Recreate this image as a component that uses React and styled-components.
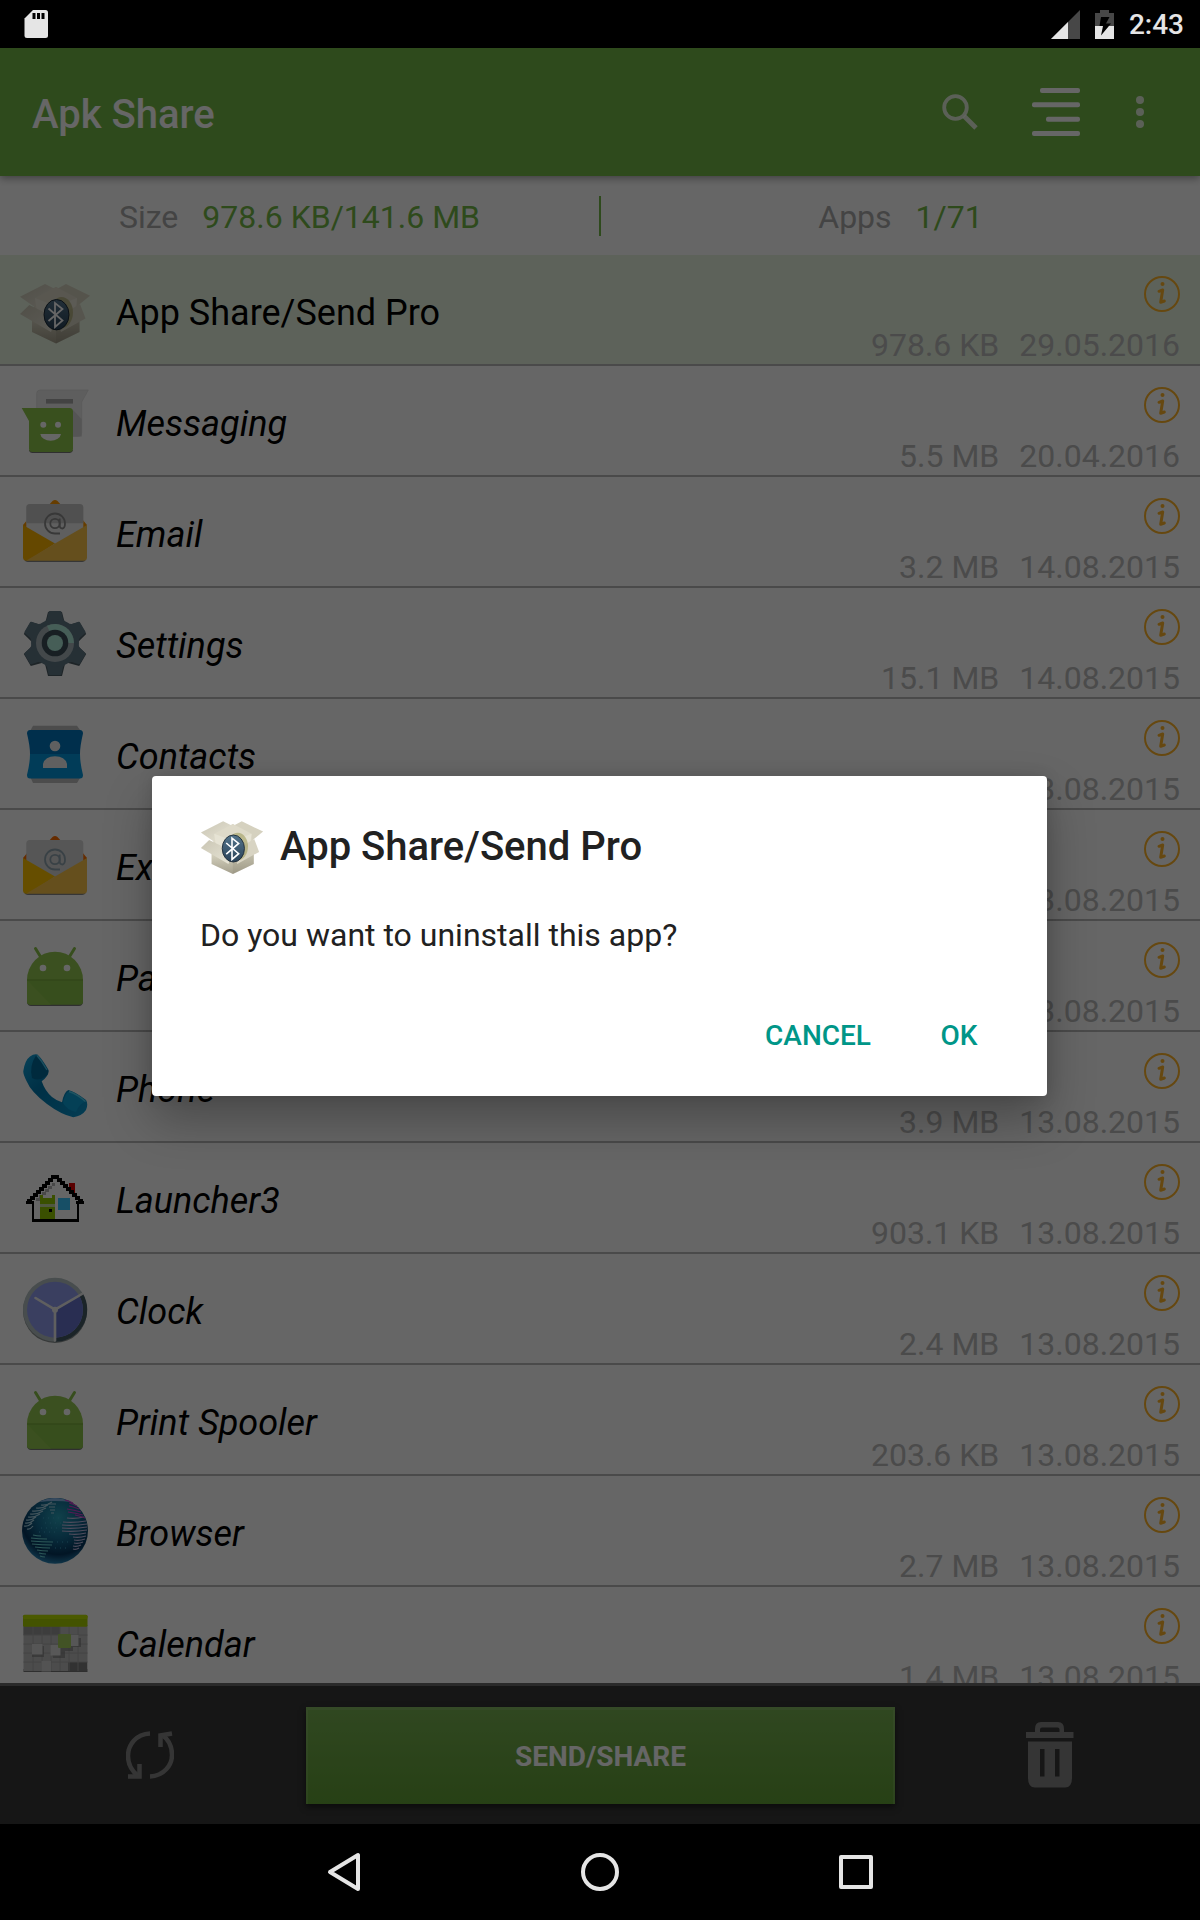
import React, { useId } from 'react'
import styled, { createGlobalStyle } from 'styled-components'

const GlobalStyle = createGlobalStyle`
    * {
        box-sizing: border-box;
    }

    body {
        margin: 0;
        background: #000;
        font-family: Roboto, 'Noto Sans', sans-serif;
    }

    button {
        border: 0;
        padding: 0;
        background: none;
        font-family: inherit;
        cursor: pointer;
    }

    svg {
        display: block;
        flex: none;
    }
`

const green = '#73b946'
const grey = '#aaa'

const Device = styled.div`
    display: flex;
    flex-direction: column;
    height: 100vh;
`

const StatusBar = styled.div`
    display: flex;
    align-items: center;
    height: 48px;
    padding: 0 16px 0 24px;
    color: #e5e5e5;
`

const StatusRight = styled.div`
    display: flex;
    align-items: center;
    gap: 15px;
    margin-left: auto;
`

const Time = styled.span`
    padding-top: 2px;
    font-size: 28px;
    font-weight: 500;
    line-height: 32px;
`

const Screen = styled.div`
    position: relative;
    flex: 1;
    min-height: 0;
    display: flex;
    flex-direction: column;
    background: #fff;
`

const Header = styled.header`
    position: relative;
    display: flex;
    align-items: center;
    height: 128px;
    padding: 0 24px 0 32px;
    background: ${green};
    color: #fff;
    box-shadow: 0 2px 8px rgba(0, 0, 0, 0.4);

    h1 {
        margin: 0 auto 0 0;
        padding-top: 5px;
        font-size: 40px;
        font-weight: 500;
        line-height: 48px;
    }
`

const HeaderButton = styled.button`
    display: flex;
    justify-content: center;
    width: ${props => props.$width}px;
    color: ${props => props.$faded ? 'rgba(255, 255, 255, 0.8)' : '#fff'};
`

const Summary = styled.div`
    display: flex;
    align-items: center;
    height: 79px;
`

const SummaryCell = styled.div`
    flex: 1;
    display: flex;
    justify-content: center;
    gap: 24px;
    height: 40px;
    color: ${grey};
    font-size: 32px;
    line-height: 42px;

    & + & {
        border-left: 2px solid ${green};
    }

    strong {
        font-weight: 400;
        color: ${green};
    }
`

const AppList = styled.ul`
    flex: 1;
    min-height: 0;
    margin: 0;
    padding: 0;
    overflow: hidden;
    list-style: none;
`

const Row = styled.li`
    display: flex;
    justify-content: space-between;
    height: 111px;
    border-bottom: 2px solid #b9b9b9;
    background: ${props => props.$selected ? '#e8f5e1' : '#fff'};
`

const RowMain = styled.div`
    display: flex;
    align-items: center;
    gap: 25px;
    padding: 7px 0 0 19px;
`

const RowName = styled.span`
    font-size: 36px;
    line-height: 42px;
    font-style: ${props => props.$system ? 'italic' : 'normal'};
`

const RowSide = styled.div`
    display: flex;
    flex-direction: column;
    align-items: flex-end;
    justify-content: space-between;
    padding: 21px 20px 0 0;
`

const InfoButton = styled.button`
    color: #ffb429;
`

const Meta = styled.div`
    display: flex;
    gap: 20px;
    color: #bbb;
    font-size: 32px;
    line-height: 38px;
`

const Footer = styled.footer`
    display: flex;
    align-items: center;
    height: 141px;
    border-top: 3px solid #6a6a6a;
    background: #373737;
`

const FooterButton = styled.button`
    display: flex;
    justify-content: center;
    width: 25%;
    color: #848484;
`

const SendButton = styled.button`
    flex: 1;
    height: 97px;
    margin: 0 5px 0 6px;
    border: solid rgba(255, 255, 255, 0.1);
    border-width: 3px 2px 0;
    background: linear-gradient(#78b252, #62a136) border-box;
    box-shadow: 0 3px 6px rgba(0, 0, 0, 0.5);
    color: #fff;
    font-size: 28px;
    font-weight: 700;
`

const Scrim = styled.div`
    position: absolute;
    inset: 0;
    display: flex;
    align-items: center;
    padding: 0 153px 0 152px;
    background: rgba(0, 0, 0, 0.6);
`

const Dialog = styled.section`
    flex: 1;
    padding: 39px 40px 25px 48px;
    border-radius: 4px;
    background: #fff;
    box-shadow: 0 24px 48px rgba(0, 0, 0, 0.28), 0 0 16px rgba(0, 0, 0, 0.12);
    color: #212121;

    p {
        margin: 36px 0 0;
        font-size: 32px;
        line-height: 40px;
    }
`

const DialogTitle = styled.div`
    display: flex;
    align-items: center;
    gap: 16px;

    h2 {
        margin: 0;
        font-size: 40px;
        font-weight: 500;
        line-height: 48px;
    }
`

const DialogActions = styled.div`
    display: flex;
    justify-content: flex-end;
    gap: 24px;
    margin-top: 44px;
`

const DialogButton = styled.button`
    min-width: ${props => props.$width}px;
    height: 72px;
    color: #009688;
    font-size: 28px;
    font-weight: 500;
`

const NavBar = styled.nav`
    display: flex;
    align-items: center;
    justify-content: center;
    height: 96px;
`

const NavButton = styled.button`
    display: flex;
    justify-content: center;
    width: 256px;
    color: #e5e5e5;
`

const Svg = ({ size = 72, children, ...rest }) => (
    <svg width={size} height={size} viewBox="0 0 72 72" aria-hidden="true" {...rest}>{children}</svg>
)

const BoxIcon = ({ size }) => {
    const id = useId()
    return (
        <Svg size={size}>
            <defs>
                <linearGradient id={id + 'side'} x1="0" y1="0" x2="0" y2="1">
                    <stop offset="0" stopColor="#d9d5c2" />
                    <stop offset="1" stopColor="#a39e8c" />
                </linearGradient>
                <linearGradient id={id + 'flap'} x1="0" y1="0" x2="1" y2="1">
                    <stop offset="0" stopColor="#c9c5b3" />
                    <stop offset="1" stopColor="#e9e6d8" />
                </linearGradient>
                <linearGradient id={id + 'disc'} x1="0" y1="0" x2="0" y2="1">
                    <stop offset="0" stopColor="#54758c" />
                    <stop offset="1" stopColor="#2a4258" />
                </linearGradient>
            </defs>
            <path d="M13 42 37 52 60.500 42V55L37 66.500 13 55Z" fill={`url(#${id}side)`} />
            <path d="M37 50V66.500L60.500 55V42Z" fill="#8d8875" opacity="0.25" />
            <path d="M15 24 37 10 59 24V42L37 52 15 42Z" fill="#d6d2c0" />
            <path d="M1 19.700 26 7 38 13 17 31Z" fill={`url(#${id}flap)`} />
            <path d="M71 18.700 47 7 36 13 57 30Z" fill="#d5d1bf" />
            <path d="M16 21 37 10 58 21V31L37 27 16 31Z" fill="#dedac9" />
            <path d="M16 21 37 29 58 21 56 36 37 45 18 36Z" fill="#e6e3d4" />
            <path d="M10.300 28 37 41 32 55 1 37Z" fill={`url(#${id}flap)`} />
            <path d="M61 27 37 41 42 55 66.500 41.500Z" fill="#d8d4c3" />
            <ellipse cx="42.500" cy="35.500" rx="11.500" ry="15.500" fill="#a9a66f" opacity="0.7" />
            <ellipse cx="37.500" cy="37.700" rx="12.500" ry="15.200" fill={`url(#${id}disc)`} stroke="#1c2a36" />
            <path d="M29.500 31.500 43.500 43.500 36 50V26L43.500 32 29.500 44" fill="none" stroke="#fff" strokeWidth="1.800" />
        </Svg>
    )
}

const MessagingIcon = () => (
    <Svg>
        <path d="M21 2H69.300L62.700 14V45a3.500 3.500 0 0 1-3.500 3.500H21.200a3.500 3.500 0 0 1-3.500-3.500V5.500A3.500 3.500 0 0 1 21 2Z" fill="#ececec" stroke="#ddd" strokeWidth="0.700" />
        <path d="M54 22 62.700 31V48.500H54Z" fill="#d5d5d5" />
        <rect x="27" y="11" width="27" height="4.600" fill="#a8a8a8" />
        <path d="M10 62a3.500 3.500 0 0 0 3.500 3H51a3.500 3.500 0 0 0 3-3Z" fill="#777" />
        <path d="M2.700 20H50.500A3.500 3.500 0 0 1 54 23.500V60.500A3.500 3.500 0 0 1 50.500 64H13.500A3.500 3.500 0 0 1 10 60.500V33Z" fill="#8fc74b" />
        <circle cx="24.300" cy="36.700" r="3" fill="#fff" />
        <circle cx="39" cy="36.700" r="3" fill="#fff" />
        <path d="M21.300 46H42a10.400 7.500 0 0 1-20.700 0Z" fill="#fff" />
    </Svg>
)

const MailIcon = ({ top, tip, left, paper, shade, ink }) => (
    <Svg>
        <path d={`M29 ${top + 2} 33.500 ${top - 3}q2.500-2 5 0L43 ${top + 2}Z`} fill={tip} />
        <path d="M4 26 9 20H63L68 26 60 42H12Z" fill={tip} />
        <path d="M5 60q1 3 4 3H63q3 0 4-3Z" fill="#888" />
        <path d={`M7.300 ${top + 3.500}q0-3.500 3.500-3.500H60.800q3.500 0 3.500 3.500V40L36 56 7.300 40Z`} fill={paper} />
        {shade && <path d={`M7.300 24.300V${top + 3.500}q0-3.500 3.500-3.500H60.800q3.500 0 3.500 3.500V24.300Z`} fill={shade} />}
        <g fill="none" stroke={ink} strokeWidth="1.800" transform={`translate(36 ${top + 19.500})`}>
            <circle r="4.700" />
            <path d="M4.700-5V2.500q.3 2.500 2.700 2.500 2.600-.5 2.600-5A10 10 0 1 0 0 10H5" />
        </g>
        <path d="M4 26 36 44.500 9 61.800H7.500Q4 61.800 4 58.300Z" fill={left} />
        <path d="M68 26V58.300q0 3.500-3.500 3.500H7.500L9 60.500 36 44.500Z" fill="#fcc549" />
    </Svg>
)

const EmailIcon = () => <MailIcon top={5} tip="#ff9800" left="#fdb300" paper="#ededed" shade="#c9c9c9" ink="#8c8c8c" />

const ExchangeIcon = () => <MailIcon top={8} tip="#ff6f00" left="#ffc400" paper="#d6d6d6" ink="#90a4ae" />

const teeth = [0, 60, 120, 180, 240, 300]

const SettingsIcon = () => (
    <Svg>
        <g transform="translate(36 33)">
            <g transform="translate(0 1)" fill="#4a5a62">
                {teeth.map(a => <path key={a} d="M-10-20-7-32H7L10-20Z" transform={`rotate(${a})`} />)}
            </g>
            <g fill="#607885">
                {teeth.map(a => <path key={a} d="M-11-20-8-24-6.500-31q.2-1 1.200-1H5.300q1 0 1.200 1L8-24 11-20Z" transform={`rotate(${a})`} />)}
                <circle r="24" />
            </g>
            <circle r="19" fill="#a9b4ba" />
            <path d="M0 0-8-17.200A19 19 0 0 1 19 0Z" fill="#aeeada" />
            <circle r="13.300" fill="#3c4f58" />
            <circle r="8" fill="#aeeada" />
        </g>
    </Svg>
)

const ContactsIcon = () => (
    <Svg>
        <path d="M14 4.700H58L61 9V57L58 62H14L11.700 57V9Z" fill="#bdbdbd" />
        <path d="M11 9H61q3 0 3 3.500Q61 25 61 33H11Q11 25 8 12.500 8 9 11 9Z" fill="#0277bd" />
        <path d="M11 33H61Q61 42 64 54q0 3.500-3 3.500H11q-3 0-3-3.500Q11 42 11 33Z" fill="#0396db" />
        <circle cx="36" cy="25" r="5.300" fill="#f0f0f0" />
        <path d="M24 47V43Q26 35.300 36 35.300T48 43V47Z" fill="#f0f0f0" />
    </Svg>
)

const AndroidIcon = () => (
    <Svg>
        <path d="M8 59q.5 4 4 4H60q3.500 0 4-4Z" fill="#777" />
        <path d="M16.500 5.500 22 14.500M55.500 5.500 50 14.500" stroke="#8bc34a" strokeWidth="3" strokeLinecap="round" />
        <path d="M8 37A28 28.300 0 0 1 64 37Z" fill="#94c850" />
        <path d="M8 37H64V58.500q0 3.200-3.200 3.200H11.200Q8 61.700 8 58.500Z" fill="#8bc34a" />
        <path d="M8 37 32 61.700H12Q8 61.700 8 58Z" fill="#94c850" />
        <path d="M8 37H64" stroke="#7eb03f" strokeWidth="1.500" />
        <circle cx="24" cy="25" r="3.300" fill="#fff" />
        <circle cx="48" cy="25" r="3.300" fill="#fff" />
    </Svg>
)

const PhoneIcon = () => (
    <Svg>
        <defs>
            <linearGradient id="handset" x1="0" y1="0" x2="1" y2="1">
                <stop offset="0" stopColor="#12a5dc" />
                <stop offset="0.400" stopColor="#0078ad" />
                <stop offset="1" stopColor="#0a98d0" />
            </linearGradient>
        </defs>
        <path d="M4.300 17Q6 6 11 2.500 15-.500 18.500.500 24 6 29.500 16 30.500 21 22.700 27.300 26 37 33 43 38 47 43 48.300 45 38 49.300 36 56 37.500 67 46 69.500 50 67 56 63 62 54.300 63.300 42 60.500 28 50 12 38 7.500 27 4 20 4.300 17Z" fill="url(#handset)" />
        <path d="M17 1.500Q10 12 13 24 20 28 27 22 30 19 29 16 22 5 17 1.500Z" fill="#00699a" />
        <path d="M18 1.500Q23 7 28 16" fill="none" stroke="#46c3ea" strokeWidth="1.500" />
        <path d="M44 49Q46 39 50 37.500 58 40 66.500 47.500 60 50 57 58 48 56 44 49Z" fill="#0aa0d8" />
        <path d="M50 37.500Q58 40 66.500 47.500" fill="none" stroke="#4fd0f2" strokeWidth="1.500" />
    </Svg>
)

const LauncherIcon = () => (
    <Svg shapeRendering="crispEdges">
        <rect x="50" y="18" width="6" height="10" fill="#e00000" />
        <path d="M36 13 60 37V56H13V37Z" fill="#fff" />
        <path d="M33 18h3v3h-3v3h-3v3h-3v3h-3v3h-3v3h-4v-3h3v-3h3v-3h3v-3h3v-3h4Z" fill="#b5b5b5" />
        {[0, 1, 2, 3, 4, 5, 6, 7, 8].map(i => (
            <g key={i}>
                <rect x={32 - i * 3} y={10 + i * 3} width="5" height="4" />
                <rect x={35 + i * 3} y={10 + i * 3} width="5" height="4" />
            </g>
        ))}
        <path d="M7 36h8v3H7ZM57 36h8v3H57Z" />
        <path d="M13 38h2v16h43V38h2v18.500H13Z" />
        <path d="M21 30h3v3h9v-3h3v9H21ZM21 42h15v12H21Z" fill="#92c800" />
        <path d="M21 39h15v3H21Z" fill="#c8dca0" />
        <rect x="30" y="44" width="3" height="3" />
        <rect x="39" y="33" width="12" height="12" fill="#3ac5ff" />
    </Svg>
)

const ClockIcon = () => (
    <Svg>
        <circle cx="36" cy="35" r="32" fill="#8a9090" />
        <circle cx="36" cy="33.700" r="32" fill="#b4c0c2" />
        <path d="M36 33.700 63.700 17.300A32 32 0 0 1 36 65.700Z" fill="#455a64" />
        <circle cx="36" cy="33.700" r="28" fill="#929ef0" />
        <path d="M36 33.700 60 19.500A28 28 0 0 1 36 61.700Z" fill="#6874cc" />
        <path d="M36 33.700 16.500 22M36 33.700 63 18M36 33.700V64.500" stroke="#eee" strokeWidth="2.600" strokeLinecap="round" />
        <circle cx="36" cy="33.700" r="3" fill="#eee" />
    </Svg>
)

// land masses on the globe, one [x1, y, x2] dash per scan line
const westLand = [[22, 7, 33], [17, 10, 29], [13, 13, 27], [11, 16, 24], [9, 19, 21], [7, 22, 17], [6, 25, 15], [5, 28, 13], [8, 31, 14]]
const southLand = [[14, 37, 22], [12, 40, 28], [12, 43, 34], [13, 46, 33], [16, 49, 31], [18, 52, 29], [20, 55, 27], [21, 58, 26]]
const eastLand = [[48, 20, 65], [44, 24, 67], [43, 27, 68], [43, 30, 68], [43, 33, 68], [50, 36, 67], [54, 39, 67], [55, 42, 66], [55, 45, 64], [54, 48, 62], [54, 51, 60]]
const glow = [[46, 2, 54], [50, 5, 58], [50, 8, 60], [48, 11, 62], [49, 14, 64], [56, 17, 66]]

const Land = ({ lines, tilt, stroke }) => (
    <path d={lines.map(([x1, y, x2]) => `M${x1} ${y}Q${(x1 + x2) / 2} ${y + 1} ${x2} ${y + tilt}`).join('')} stroke={stroke} />
)

const BrowserIcon = () => (
    <Svg>
        <defs>
            <radialGradient id="globe" cx="0.550" cy="0.300" r="0.700">
                <stop offset="0" stopColor="#2aa3bb" />
                <stop offset="0.450" stopColor="#146c94" />
                <stop offset="0.800" stopColor="#06355c" />
                <stop offset="1" stopColor="#2682b4" />
            </radialGradient>
        </defs>
        <circle cx="36" cy="32.700" r="33" fill="url(#globe)" />
        <path d="M20 4Q36-4 52 4 36 2 20 4Z" fill="#8ab8e8" />
        <g fill="none" strokeWidth="1.200">
            <Land lines={westLand} tilt={-3} stroke="#a9d4e6" />
            <Land lines={southLand} tilt={1} stroke="#6fdada" />
            <Land lines={eastLand} tilt={-1} stroke="#c4bde6" />
            <Land lines={glow} tilt={3} stroke="#d63fd0" />
            <path d="M29 6h8M30 9h6M31 12h5M32 15h3" stroke="#a9d4e6" />
        </g>
        <path d="M22 30h18M20 34h20M38 44h14M36 50h14M24 20h20M26 25h16" stroke="#3fa4c8" strokeWidth="1" strokeDasharray="1 4" />
    </Svg>
)

const CalendarIcon = () => (
    <Svg>
        <rect x="4.500" y="60" width="64" height="3" fill="#777" />
        <rect x="4.500" y="16" width="64" height="46" fill="#bdbdbd" />
        <rect x="4.500" y="17" width="36.500" height="9" fill="#989898" />
        <rect x="49" y="53" width="19" height="9" fill="#7d7d7d" />
        <path d="M14 17V62M23 17V62M32 17V62M41 17V62M50 17V62M59 17V62M4.500 26H68.500M4.500 35H68.500M4.500 44H68.500M4.500 53H68.500" stroke="#a8a8a8" />
        <rect x="4" y="5.700" width="64.500" height="12" rx="1.500" fill="#a9d000" />
        <rect x="4" y="6" width="64.500" height="4" rx="1.500" fill="#bbe000" />
        <path d="M13 37h12v11H13ZM32 39h14v10H34ZM42 28h12v14H42ZM54 29h8v9h-8Z" fill="#777" opacity="0.6" />
        <rect x="13" y="35" width="10.500" height="10.500" fill="#d6d6d6" />
        <rect x="31.500" y="36" width="10" height="10.500" fill="#dcdcdc" />
        <rect x="51.500" y="26" width="8" height="11" fill="#d6d6d6" />
        <rect x="22.500" y="52" width="9.500" height="10.500" fill="#cfcfcf" />
        <rect x="39" y="25" width="13" height="14" rx="1" fill="#a5cf5c" />
    </Svg>
)

const InfoIcon = () => (
    <svg width="36" height="36" viewBox="0 0 36 36" fill="none" stroke="currentColor" aria-hidden="true">
        <circle cx="18" cy="18" r="17" strokeWidth="2" />
        <circle cx="18.500" cy="8" r="2" fill="currentColor" stroke="none" />
        <path d="M15 15.300 18.700 14 16.700 26.300 20.300 25" strokeWidth="3" strokeLinecap="round" strokeLinejoin="round" />
    </svg>
)

const apps = [
    { name: 'App Share/Send Pro', size: '978.6 KB', date: '29.05.2016', Icon: BoxIcon, selected: true },
    { name: 'Messaging', size: '5.5 MB', date: '20.04.2016', Icon: MessagingIcon, system: true },
    { name: 'Email', size: '3.2 MB', date: '14.08.2015', Icon: EmailIcon, system: true },
    { name: 'Settings', size: '15.1 MB', date: '14.08.2015', Icon: SettingsIcon, system: true },
    { name: 'Contacts', size: '4.1 MB', date: '13.08.2015', Icon: ContactsIcon, system: true },
    { name: 'Exchange', size: '1.2 MB', date: '13.08.2015', Icon: ExchangeIcon, system: true },
    { name: 'Package', size: '1.1 MB', date: '13.08.2015', Icon: AndroidIcon, system: true },
    { name: 'Phone', size: '3.9 MB', date: '13.08.2015', Icon: PhoneIcon, system: true },
    { name: 'Launcher3', size: '903.1 KB', date: '13.08.2015', Icon: LauncherIcon, system: true },
    { name: 'Clock', size: '2.4 MB', date: '13.08.2015', Icon: ClockIcon, system: true },
    { name: 'Print Spooler', size: '203.6 KB', date: '13.08.2015', Icon: AndroidIcon, system: true },
    { name: 'Browser', size: '2.7 MB', date: '13.08.2015', Icon: BrowserIcon, system: true },
    { name: 'Calendar', size: '1.4 MB', date: '13.08.2015', Icon: CalendarIcon, system: true },
]

const AppRow = ({ app }) => {
    const { name, size, date, Icon, selected, system } = app

    return (
        <Row $selected={selected}>
            <RowMain>
                <Icon />
                <RowName $system={system}>{name}</RowName>
            </RowMain>
            <RowSide>
                <InfoButton aria-label={`About ${name}`}><InfoIcon /></InfoButton>
                <Meta>
                    <span>{size}</span>
                    <span>{date}</span>
                </Meta>
            </RowSide>
        </Row>
    )
}

const App = () => {
    return (
        <Device>
            <GlobalStyle />
            <StatusBar>
                <svg width="24" height="28" viewBox="0 0 24 28" aria-hidden="true">
                    <path d="M9 0H21.500Q24 0 24 2.500V25.500Q24 28 21.500 28H3Q.500 28 .500 25.500V8.500Z" fill="#e5e5e5" />
                    <path d="M8.500 3h3v6h-3ZM13 3h3v6h-3ZM17.500 3h3v6h-3Z" fill="#000" />
                </svg>
                <StatusRight>
                    <svg width="29" height="29" viewBox="0 0 29 29" aria-hidden="true">
                        <path d="M29 0V29H0Z" fill="#474747" />
                        <path d="M17 12V29H0Z" fill="#e5e5e5" />
                    </svg>
                    <svg width="19" height="29" viewBox="0 0 19 29" aria-hidden="true">
                        <path d="M5 0h9v3h5v13H0V3h5Z" fill="#474747" />
                        <path d="M0 16h19v13H0Z" fill="#e5e5e5" />
                        <path d="M6 7h8.500L11 13.500h5L6 25.500 8 16H4.500Z" fill="#000" />
                    </svg>
                    <Time>2:43</Time>
                </StatusRight>
            </StatusBar>

            <Screen>
                <Header>
                    <h1>Apk Share</h1>
                    <HeaderButton $width={96} $faded aria-label="Search">
                        <svg width="36" height="36" viewBox="0 0 36 36" fill="none" stroke="currentColor" aria-hidden="true">
                            <circle cx="13.500" cy="13.500" r="11.300" strokeWidth="3.800" />
                            <path d="M22 22 34 34" strokeWidth="4.800" />
                        </svg>
                    </HeaderButton>
                    <HeaderButton $width={96} aria-label="Sort">
                        <svg width="48" height="48" viewBox="0 0 48 48" fill="currentColor" aria-hidden="true">
                            <rect x="8" width="40" height="5" rx="2" />
                            <rect y="14.300" width="48" height="5" rx="2" />
                            <rect x="14" y="28.700" width="34" height="5" rx="2" />
                            <rect y="43" width="48" height="5" rx="2" />
                        </svg>
                    </HeaderButton>
                    <HeaderButton $width={72} $faded aria-label="More options">
                        <svg width="8" height="32" viewBox="0 0 8 32" fill="currentColor" aria-hidden="true">
                            <circle cx="4" cy="4" r="4" />
                            <circle cx="4" cy="16" r="4" />
                            <circle cx="4" cy="28" r="4" />
                        </svg>
                    </HeaderButton>
                </Header>

                <Summary>
                    <SummaryCell>Size <strong>978.6 KB/141.6 MB</strong></SummaryCell>
                    <SummaryCell>Apps <strong>1/71</strong></SummaryCell>
                </Summary>

                <AppList>
                    {apps.map(app => <AppRow key={app.name} app={app} />)}
                </AppList>

                <Footer>
                    <FooterButton aria-label="Refresh">
                        <svg width="48" height="48" viewBox="0 0 48 48" fill="none" stroke="currentColor" strokeWidth="4.500" aria-hidden="true">
                            <path d="M24 2.500C10 3 2 14 2 25 2 34 7 41 12 45M24 45.500C38 45 46 34 46 24 46 15 42 8 36 4" />
                            <path d="M46 2.500 34.500 4.500V16M2 45.500H13.500V33" />
                        </svg>
                    </FooterButton>
                    <SendButton>SEND/SHARE</SendButton>
                    <FooterButton aria-label="Uninstall">
                        <svg width="50" height="66" viewBox="0 0 50 66" fill="currentColor" aria-hidden="true">
                            <path d="M10 10V7Q10 0 16 0H33Q39 0 39 7V10H48.500V16H1V10ZM15 10H34.500V7.500Q34.500 5.500 32.500 5.500H17Q15 5.500 15 7.500Z" fillRule="evenodd" />
                            <path d="M3 19.500H47V56Q47 65.500 40 65.500H10Q3 65.500 3 56ZM15 27V54.500H19.500V27ZM30 27V54.500H34.500V27Z" fillRule="evenodd" />
                        </svg>
                    </FooterButton>
                </Footer>

                <Scrim>
                    <Dialog role="dialog" aria-labelledby="dialog-title">
                        <DialogTitle>
                            <BoxIcon size={64} />
                            <h2 id="dialog-title">App Share/Send Pro</h2>
                        </DialogTitle>
                        <p>Do you want to uninstall this app?</p>
                        <DialogActions>
                            <DialogButton $width={138}>CANCEL</DialogButton>
                            <DialogButton $width={96}>OK</DialogButton>
                        </DialogActions>
                    </Dialog>
                </Scrim>
            </Screen>

            <NavBar>
                <NavButton aria-label="Back">
                    <svg width="36" height="40" viewBox="0 0 36 40" fill="none" stroke="currentColor" strokeWidth="4" strokeLinejoin="round" aria-hidden="true">
                        <path d="M32 3V37L4 20Z" />
                    </svg>
                </NavButton>
                <NavButton aria-label="Home">
                    <svg width="40" height="40" viewBox="0 0 40 40" fill="none" stroke="currentColor" strokeWidth="4" aria-hidden="true">
                        <circle cx="20" cy="20" r="17" />
                    </svg>
                </NavButton>
                <NavButton aria-label="Recent apps">
                    <svg width="34" height="34" viewBox="0 0 34 34" fill="none" stroke="currentColor" strokeWidth="4" strokeLinejoin="round" aria-hidden="true">
                        <rect x="2" y="2" width="30" height="30" />
                    </svg>
                </NavButton>
            </NavBar>
        </Device>
    )
}

export default App
